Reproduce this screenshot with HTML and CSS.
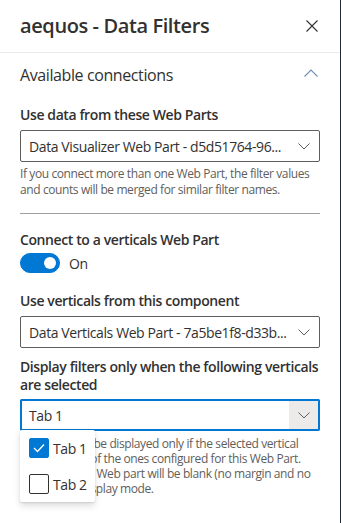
FILE: index.html
```html
<!DOCTYPE html>
<html lang="en">
<head>
    <meta charset="UTF-8">
    <meta name="viewport" content="width=device-width, initial-scale=1.0">
    <title>aequos - Data Filters</title>
    <link rel="stylesheet" href="styles.css">
</head>
<body>
<div class="panel">
    <!-- Header -->
    <div class="panel-header">
        <h1 class="panel-title">aequos - Data Filters</h1>
        <button class="close-btn" title="Close">
            <svg width="12" height="12" viewBox="0 0 12 12"><path d="M0.5 0.5 L11.5 11.5 M11.5 0.5 L0.5 11.5" stroke="#323130" stroke-width="1.1" fill="none"/></svg>
        </button>
    </div>

    <!-- Available connections -->
    <div class="section">
        <div class="section-header">
            <span>Available connections</span>
            <svg width="14" height="8" viewBox="0 0 14 8"><polyline points="0.5,7.5 7,1 13.5,7.5" stroke="#6b8fb8" stroke-width="1.1" fill="none"/></svg>
        </div>

        <div class="section-body">
            <div class="field">
                <label class="field-label">Use data from these Web Parts</label>
                <div class="dropdown">
                    <span class="dropdown-text">Data Visualizer Web Part - d5d51764-96...</span>
                    <span class="dropdown-caret">
                        <svg width="12" height="7" viewBox="0 0 12 7"><polyline points="0.5,0.5 6,6 11.5,0.5" stroke="#605e5c" stroke-width="1" fill="none"/></svg>
                    </span>
                </div>
                <p class="field-help">If you connect more than one Web Part, the filter values<br>and counts will be merged for similar filter names.</p>
            </div>

            <hr class="divider">

            <div class="field">
                <div class="toggle-label">Connect to a verticals Web Part</div>
                <div class="toggle-row">
                    <span class="toggle is-on"><span class="toggle-thumb"></span></span>
                    <span class="toggle-text">On</span>
                </div>
            </div>

            <div class="field field-spaced">
                <label class="field-label">Use verticals from this component</label>
                <div class="dropdown">
                    <span class="dropdown-text">Data Verticals Web Part - 7a5be1f8-d33b...</span>
                    <span class="dropdown-caret">
                        <svg width="12" height="7" viewBox="0 0 12 7"><polyline points="0.5,0.5 6,6 11.5,0.5" stroke="#605e5c" stroke-width="1" fill="none"/></svg>
                    </span>
                </div>
            </div>

            <div class="field field-tight">
                <label class="field-label field-label-wrap">Display filters only when the following verticals are selected</label>
                <div class="dropdown is-focused">
                    <span class="dropdown-text">Tab 1</span>
                    <span class="dropdown-caret">
                        <svg width="12" height="7" viewBox="0 0 12 7"><polyline points="0.5,0.5 6,6 11.5,0.5" stroke="#605e5c" stroke-width="1" fill="none"/></svg>
                    </span>

                    <!-- open options list -->
                    <div class="dropdown-callout">
                        <div class="option">
                            <span class="checkbox is-checked">
                                <svg width="12" height="10" viewBox="0 0 12 10"><polyline points="1,5 4.5,8.5 11,1.5" stroke="#fff" stroke-width="1.4" fill="none"/></svg>
                            </span>
                            <span class="option-text">Tab 1</span>
                        </div>
                        <div class="option">
                            <span class="checkbox"></span>
                            <span class="option-text">Tab 2</span>
                        </div>
                    </div>
                </div>
                <p class="field-help field-help-dense">The filters will be displayed only if the selected vertical<br>matches one of the ones configured for this Web Part.<br>Otherwise the Web part will be blank (no margin and no<br>padding) in display mode.</p>
            </div>
        </div>
    </div>
</div>
</body>
</html>
```

FILE: styles.css
```css
body {
    font-family: "Open Sans", "Noto Sans", sans-serif;
    letter-spacing: -0.025em;
    color: #323130;
    margin: 0;
    padding: 0;
    background: #fff;
}
.panel {
    width: 340px;
    height: 523px;
    border-right: 1px solid #1e2b38;
    box-sizing: content-box;
    overflow: hidden;
}
.panel-header {
    height: 52px;
    border-bottom: 1px solid #edebe9;
    display: flex;
    align-items: center;
    justify-content: space-between;
    padding: 0 22px 0 20px;
}
.panel-title {
    margin: 0;
    font-size: 20px;
    font-weight: 600;
    line-height: 28px;
}
.close-btn {
    background: none;
    border: none;
    padding: 0;
    width: 12px;
    height: 12px;
    display: flex;
    cursor: pointer;
}
.section-header {
    height: 44px;
    display: flex;
    align-items: center;
    justify-content: space-between;
    padding: 0 22px 0 20px;
    font-size: 16px;
}
.section-header svg {
    margin-top: -4px;
}
.section-body {
    padding: 3px 20px 0 20px;
}
.field-label {
    display: block;
    font-size: 14px;
    font-weight: 600;
    line-height: 20px;
    padding: 5px 0;
}
.field-label-wrap {
    line-height: 18px;
}
.field-spaced {
    margin-top: 13px;
}
.field-tight {
    margin-top: 5px;
}
.dropdown {
    position: relative;
    height: 32px;
    border: 1px solid #605e5c;
    border-radius: 2px;
    box-sizing: border-box;
    display: flex;
    align-items: center;
    font-size: 14px;
}
.dropdown-text {
    flex: 1;
    padding-left: 8px;
    white-space: nowrap;
    overflow: hidden;
    text-overflow: ellipsis;
}
.dropdown-caret {
    width: 30px;
    height: 100%;
    display: flex;
    align-items: center;
    justify-content: center;
    flex-shrink: 0;
}
.dropdown.is-focused::after {
    content: "";
    position: absolute;
    top: -1px;
    left: -1px;
    right: -1px;
    bottom: -1px;
    border: 2px solid #0078d4;
    border-radius: 2px;
    pointer-events: none;
}
.dropdown.is-focused .dropdown-caret {
    background: #edebe9;
}
.field-help {
    margin: 4px 0 0 0;
    font-size: 12px;
    line-height: 16px;
    color: #605e5c;
}
.field-help-dense {
    margin-top: 5px;
    line-height: 15px;
}
.divider {
    border: none;
    border-top: 1px solid #a19f9d;
    margin: 15px 0 16px 0;
}
.toggle-label {
    font-size: 14px;
    font-weight: 600;
    line-height: 20px;
    margin-bottom: 3px;
}
.toggle-row {
    display: flex;
    align-items: center;
}
.toggle {
    width: 40px;
    height: 20px;
    border-radius: 10px;
    box-sizing: border-box;
    border: 1px solid #605e5c;
    display: flex;
    align-items: center;
    padding: 0 3px;
}
.toggle.is-on {
    background: #0078d4;
    border-color: #0078d4;
    justify-content: flex-end;
}
.toggle-thumb {
    width: 12px;
    height: 12px;
    border-radius: 50%;
    background: #fff;
}
.toggle-text {
    font-size: 14px;
    margin-left: 9px;
}
.dropdown-callout {
    position: absolute;
    top: 100%;
    left: -1px;
    width: 75px;
    background: #fff;
    box-shadow: 0 3.2px 7.2px rgba(0, 0, 0, 0.13), 0 0.6px 1.8px rgba(0, 0, 0, 0.11);
    border-radius: 2px;
    z-index: 2;
}
.option {
    height: 36px;
    display: flex;
    align-items: center;
    padding-left: 9px;
    font-size: 14px;
}
.checkbox {
    width: 20px;
    height: 20px;
    box-sizing: border-box;
    border: 1px solid #323130;
    border-radius: 2px;
    display: flex;
    align-items: center;
    justify-content: center;
    margin-right: 4px;
}
.checkbox.is-checked {
    background: #0078d4;
    border-color: #0078d4;
}
```
